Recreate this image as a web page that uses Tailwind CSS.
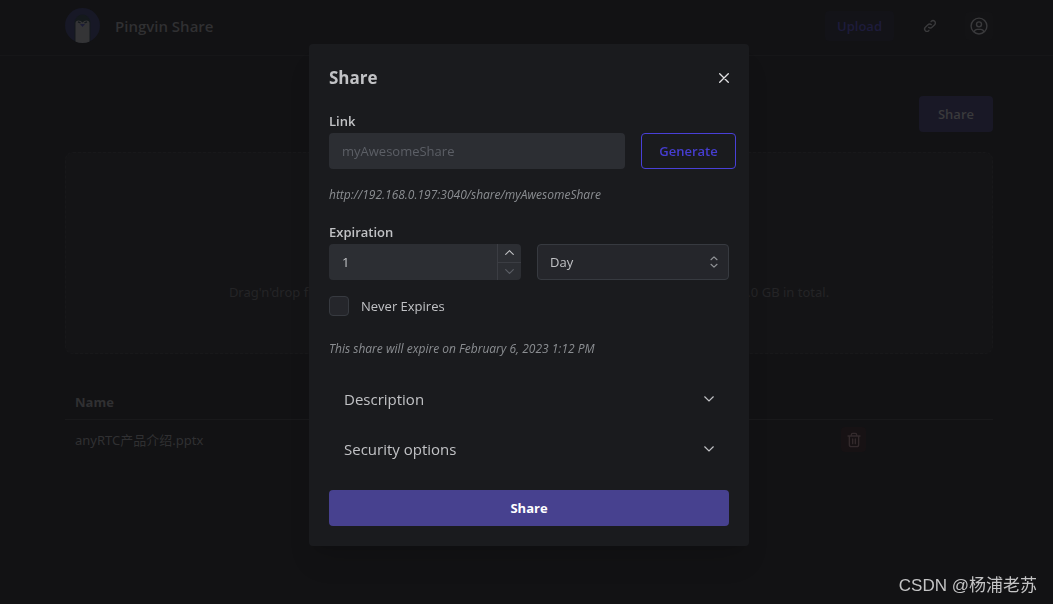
<!DOCTYPE html>
<html lang="en">
<head>
<meta charset="utf-8">
<meta name="viewport" content="width=device-width, initial-scale=1">
<title>Pingvin Share</title>
<script src="https://cdn.jsdelivr.net/npm/@tailwindcss/browser@4"></script>
</head>
<body class="min-h-screen bg-[#121214] font-['Open_Sans','Noto_Sans_CJK_SC',sans-serif] text-[13px] leading-[22px] text-[#303032]">

<!-- Page behind the dialog -->
<header class="h-14 border-b border-[#161618] pr-[60px] pl-[65px]">
  <div class="mx-auto flex h-[51px] max-w-[928px] items-center justify-between">
    <a href="#" class="flex items-center gap-[15px]">
      <svg class="size-[35px]" viewBox="0 0 35 35" aria-hidden="true">
        <defs><clipPath id="disc"><circle cx="17.5" cy="17.5" r="17.5"/></clipPath></defs>
        <circle cx="17.5" cy="17.5" r="17.5" fill="#171826"/>
        <g clip-path="url(#disc)">
          <path d="M9.500 35V15a8 8.500 0 0 1 16 0v20z" fill="#14191c"/>
          <path d="M10.500 35V15q0-2.500 3-2.500 2.500 0 4 2 1.500-2 4-2 3 0 3 2.500v20z" fill="#343436"/>
          <path d="M13 13.800l2.500 1M22 13.800l-2.500 1" stroke="#14191c" stroke-width="1.300"/>
          <path d="M15 16h5l-2.500 3z" fill="#1c1c36"/>
        </g>
      </svg>
      <span class="text-[15px] font-semibold">Pingvin Share</span>
    </a>
    <nav class="flex items-center">
      <a href="#" class="rounded bg-[#131318] px-3 py-1 font-semibold text-[#1e1c3c]">Upload</a>
      <button type="button" aria-label="Links" class="ml-7 text-[#3a3a3c]">
        <svg class="size-4" viewBox="0 0 24 24" fill="none" stroke="currentColor" stroke-width="2" stroke-linecap="round" stroke-linejoin="round"><path d="M10 14a3.500 3.500 0 0 0 5 0l4-4a3.500 3.500 0 0 0-5-5l-.5.5"/><path d="M14 10a3.500 3.500 0 0 0-5 0l-4 4a3.500 3.500 0 0 0 5 5l.5-.5"/></svg>
      </button>
      <button type="button" aria-label="Account" class="ml-[27px] rounded bg-[#131315] p-1 text-[#3a3a3c]">
        <svg class="size-5" viewBox="0 0 24 24" fill="none" stroke="currentColor" stroke-width="1.700" stroke-linecap="round"><circle cx="12" cy="12" r="9.500"/><circle cx="12" cy="10" r="3"/><path d="M6.200 18.800a4 4 0 0 1 3.800-2.800h4a4 4 0 0 1 3.800 2.800"/></svg>
      </button>
    </nav>
  </div>
</header>

<main class="pt-10 pr-[60px] pl-[65px]">
  <div class="mx-auto max-w-[928px]">
    <div class="flex justify-end">
      <button type="button" class="h-9 rounded bg-[#191826] px-[19px] font-semibold text-[#3a3a3c]">Share</button>
    </div>
    <section class="mt-5 flex h-[202px] items-end justify-center rounded-lg border border-dashed border-[#18181a] bg-[#141416] pb-[50px]">
      <p class="font-['Noto_Sans',sans-serif] whitespace-nowrap text-[#242426]">Drag'n'drop files here to start your share. We can accept only files that are less than 1.0 GB in total.</p>
    </section>
    <table class="mt-8 w-full text-left">
      <thead>
        <tr class="border-b border-[#19191b]">
          <th class="px-[10px] pt-[5px] pb-[6px] font-bold">Name</th>
          <th aria-label="Actions"></th>
        </tr>
      </thead>
      <tbody>
        <tr>
          <td class="px-[10px] py-[7px] font-['Noto_Sans','Noto_Sans_CJK_SC',sans-serif]">anyRTC产品介绍.pptx</td>
          <td class="w-[152px] py-[7px]">
            <button type="button" aria-label="Delete" class="flex size-[25px] items-center justify-center rounded bg-[#171214] text-[#332a2c]">
              <svg class="size-4" viewBox="0 0 24 24" fill="none" stroke="currentColor" stroke-width="2" stroke-linecap="round" stroke-linejoin="round"><path d="M3 6h18M5 6v13a3 3 0 0 0 3 3h8a3 3 0 0 0 3-3V6M8 6V4a2 2 0 0 1 2-2h4a2 2 0 0 1 2 2v2M10 10.500v7M14 10.500v7"/></svg>
            </button>
          </td>
        </tr>
      </tbody>
    </table>
  </div>
</main>

<p class="fixed right-4 bottom-1 font-['Liberation_Sans','Noto_Sans_CJK_SC',sans-serif] text-[17px] leading-[28px] text-[#c4c4c5]">CSDN @杨浦老苏</p>

<!-- Share dialog -->
<div class="fixed inset-0 flex items-start justify-center overflow-auto pt-11 pl-[5px]">
  <form role="dialog" aria-modal="true" aria-labelledby="title" class="w-full max-w-[440px] rounded bg-[#1a1b1e] p-5 text-[#c1c2c5] shadow-xl">
    <div class="flex h-7 items-center justify-between">
      <h1 id="title" class="text-[17px] font-bold">Share</h1>
      <button type="button" aria-label="Close" class="-mr-[9px] flex size-7 items-center justify-center text-[#e2e2e4]">
        <svg class="size-[10px]" viewBox="0 0 10 10" fill="none" stroke="currentColor" stroke-width="1.300" stroke-linecap="round"><path d="M.7.7l8.600 8.600M9.300.7L.7 9.300"/></svg>
      </button>
    </div>

    <label for="link" class="mt-[18px] block pb-px font-semibold">Link</label>
    <div class="-mr-[7px] flex gap-4">
      <input id="link" type="text" placeholder="myAwesomeShare" class="h-9 min-w-0 flex-1 rounded bg-[#2c2e33] px-[13px] placeholder-[#5c5f66] outline-none">
      <button type="button" class="h-9 w-[95px] rounded border border-[#4940d8] font-semibold text-[#463dd0]">Generate</button>
    </div>
    <p class="mt-4 text-[12px] leading-5 text-[#8b8e92] italic">http://192.168.0.197:3040/share/myAwesomeShare</p>

    <div class="mt-4 grid grid-cols-2 gap-4">
      <div>
        <label for="amount" class="block pb-px font-semibold">Expiration</label>
        <div class="flex h-9 overflow-hidden rounded bg-[#2c2e33]">
          <input id="amount" type="text" inputmode="numeric" value="1" class="min-w-0 flex-1 px-[13px] outline-none">
          <div class="flex w-6 flex-col border-l border-[#3b3d43]">
            <button type="button" aria-label="Increase" class="flex flex-1 items-center justify-center border-b border-[#3b3d43]">
              <svg class="h-[5px] w-[9px]" viewBox="0 0 9 5" fill="none" stroke="currentColor" stroke-width="1.100" stroke-linecap="round"><path d="M.7 4.400L4.500.7l3.800 3.700"/></svg>
            </button>
            <button type="button" aria-label="Decrease" class="flex flex-1 items-center justify-center text-[#5c5f66]">
              <svg class="h-[5px] w-[9px]" viewBox="0 0 9 5" fill="none" stroke="currentColor" stroke-width="1.100" stroke-linecap="round"><path d="M.7.7l3.800 3.700L8.300.7"/></svg>
            </button>
          </div>
        </div>
      </div>
      <div class="relative self-end">
        <select aria-label="Expiration unit" class="block h-9 w-full appearance-none rounded border border-[#373a40] bg-[#25262b] px-3 outline-none">
          <option>Day</option>
          <option>Week</option>
          <option>Month</option>
        </select>
        <svg class="pointer-events-none absolute top-3 right-[11px] h-3 w-2" viewBox="0 0 8 12" fill="none" stroke="#909296" stroke-width="1.200" stroke-linecap="round" stroke-linejoin="round"><path d="M1 3.700L4 .9l3 2.800M1 8.300l3 2.800 3-2.800"/></svg>
      </div>
    </div>

    <label class="mt-4 flex h-5 items-center gap-3">
      <input type="checkbox" class="size-5 appearance-none rounded border border-[#373a40] bg-[#25262b] checked:bg-[#47418f]">
      Never Expires
    </label>
    <p class="mt-[23px] text-[12px] leading-5 text-[#8b8e92] italic">This share will expire on February 6, 2023 1:12 PM</p>

    <div class="mt-[15px] text-[15px]">
      <button type="button" aria-expanded="false" class="flex h-[50px] w-full items-center justify-between px-[15px]">
        Description
        <svg class="h-[6px] w-[10px]" viewBox="0 0 10 6" fill="none" stroke="currentColor" stroke-width="1.200" stroke-linecap="round"><path d="M.7.8L5 5 9.300.8"/></svg>
      </button>
      <button type="button" aria-expanded="false" class="flex h-[50px] w-full items-center justify-between px-[15px]">
        Security options
        <svg class="h-[6px] w-[10px]" viewBox="0 0 10 6" fill="none" stroke="currentColor" stroke-width="1.200" stroke-linecap="round"><path d="M.7.8L5 5 9.300.8"/></svg>
      </button>
    </div>
    <button type="submit" class="mt-4 h-9 w-full rounded bg-[#47418f] font-bold text-white">Share</button>
  </form>
</div>
</body>
</html>
